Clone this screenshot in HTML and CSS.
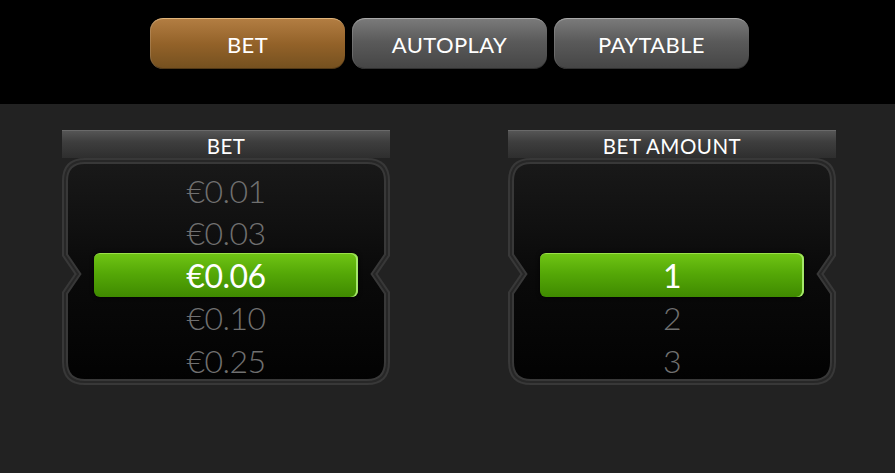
FILE: index.html
```html
<!DOCTYPE html>
<html>
<head>
<meta charset="utf-8">
<link rel="stylesheet" href="styles.css">
</head>
<body>
<div class="topbar">
  <div class="tabs">
    <div class="tab tab-active">BET</div>
    <div class="tab">AUTOPLAY</div>
    <div class="tab">PAYTABLE</div>
  </div>
</div>
<div class="main">
  <div class="panel">
    <div class="panel-head">BET</div>
    <div class="frame">
      <svg class="frame-bg" width="328" height="227" viewBox="0 0 328 227">
        <defs>
          <linearGradient id="fg1" x1="0" y1="0" x2="0" y2="1">
            <stop offset="0" stop-color="#191919"/>
            <stop offset="0.5" stop-color="#0a0a0a"/>
            <stop offset="1" stop-color="#020202"/>
          </linearGradient>
        </defs>
        <path d="M23 3 H305 Q325 3 325 23 V97 L312 116 L325 135 V204 Q325 224 305 224 H23 Q3 224 3 204 V135 L16 116 L3 97 V23 Q3 3 23 3 Z" fill="url(#fg1)" stroke="#383838" stroke-width="6"/>
        <path d="M23 3 H305 Q325 3 325 23 V97 L312 116 L325 135 V204 Q325 224 305 224 H23 Q3 224 3 204 V135 L16 116 L3 97 V23 Q3 3 23 3 Z" fill="none" stroke="#272727" stroke-width="2"/>
      </svg>
      <div class="rows">
        <div class="row">€0.01</div>
        <div class="row">€0.03</div>
        <div class="row row-sel"><span class="sel-bar">€0.06</span></div>
        <div class="row">€0.10</div>
        <div class="row">€0.25</div>
      </div>
    </div>
  </div>
  <div class="panel">
    <div class="panel-head">BET AMOUNT</div>
    <div class="frame">
      <svg class="frame-bg" width="328" height="227" viewBox="0 0 328 227">
        <defs>
          <linearGradient id="fg2" x1="0" y1="0" x2="0" y2="1">
            <stop offset="0" stop-color="#191919"/>
            <stop offset="0.5" stop-color="#0a0a0a"/>
            <stop offset="1" stop-color="#020202"/>
          </linearGradient>
        </defs>
        <path d="M23 3 H305 Q325 3 325 23 V97 L312 116 L325 135 V204 Q325 224 305 224 H23 Q3 224 3 204 V135 L16 116 L3 97 V23 Q3 3 23 3 Z" fill="url(#fg2)" stroke="#383838" stroke-width="6"/>
        <path d="M23 3 H305 Q325 3 325 23 V97 L312 116 L325 135 V204 Q325 224 305 224 H23 Q3 224 3 204 V135 L16 116 L3 97 V23 Q3 3 23 3 Z" fill="none" stroke="#272727" stroke-width="2"/>
      </svg>
      <div class="rows">
        <div class="row"></div>
        <div class="row"></div>
        <div class="row row-sel"><span class="sel-bar">1</span></div>
        <div class="row">2</div>
        <div class="row">3</div>
      </div>
    </div>
  </div>
</div>
</body>
</html>
```
FILE: styles.css
```css
html, body {
  margin: 0;
  padding: 0;
}
body {
  width: 895px;
  height: 473px;
  background: #222222;
  font-family: "Lato", "Liberation Sans", sans-serif;
  overflow: hidden;
}
.topbar {
  height: 104px;
  background: #000;
  display: flex;
  justify-content: center;
  padding-left: 4px;
  box-sizing: border-box;
}
.tabs {
  display: flex;
  gap: 7px;
  padding-top: 18px;
}
.tab {
  width: 195px;
  height: 51px;
  box-sizing: border-box;
  border-radius: 13px;
  background: linear-gradient(#7a7a7a, #5a5a5a 45%, #454545);
  border-top: 1px solid #a8a8a8;
  box-shadow: inset 1px 0 0 rgba(255,255,255,0.15), inset 0 -1px 0 rgba(0,0,0,0.3);
  color: #fff;
  font-size: 22px;
  display: flex;
  align-items: center;
  justify-content: center;
  letter-spacing: 0.4px;
}
.tab-active {
  background: linear-gradient(#b27d42, #936229 50%, #74501f);
  border-top: 1px solid #e0b47a;
}
.main {
  display: flex;
  justify-content: space-between;
  padding: 26px 59px 0 62px;
}
.panel {
  width: 328px;
  display: flex;
  flex-direction: column;
}
.panel-head {
  height: 28px;
  background: linear-gradient(#555, #3e3e3e 40%, #2e2e2e);
  border-top: 1px solid #6a6a6a;
  box-sizing: border-box;
  color: #fff;
  font-size: 20.5px;
  letter-spacing: 0.5px;
  display: flex;
  align-items: center;
  justify-content: center;
  padding-top: 3px;
}
.frame {
  position: relative;
  height: 227px;
}
.frame-bg {
  position: absolute;
  left: 0;
  top: 0;
}
.rows {
  position: relative;
  padding-top: 11px;
  display: flex;
  flex-direction: column;
}
.row {
  height: 42.5px;
  display: flex;
  align-items: center;
  justify-content: center;
  color: #707070;
  font-size: 32px;
  font-weight: 300;
  letter-spacing: -0.5px;
}
.row-sel {
  padding: 0 32px;
}
.sel-bar {
  flex: 1;
  height: 44px;
  box-sizing: border-box;
  border-radius: 6px;
  background: linear-gradient(#6fc414, #55a807 45%, #3f8a00);
  border-top: 1px solid #9be04a;
  box-shadow: inset -2px 0 0 #a5e86a, 0 0 4px rgba(0,0,0,0.8);
  color: #fff;
  display: flex;
  align-items: center;
  justify-content: center;
  font-weight: 400;
}
```
